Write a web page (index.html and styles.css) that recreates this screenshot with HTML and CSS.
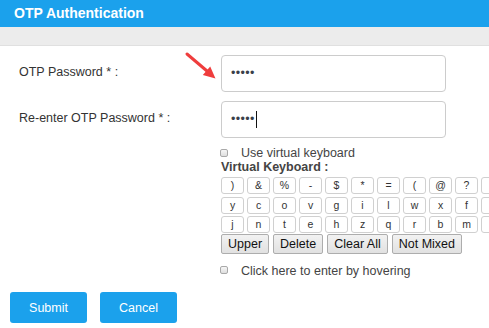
FILE: index.html
```html
<!DOCTYPE html>
<html>
<head>
<meta charset="utf-8">
<link rel="stylesheet" href="styles.css">
</head>
<body>
<div class="header">OTP Authentication</div>
<div class="band"></div>
<div class="form">
  <div class="row">
    <div class="label">OTP Password * :</div>
    <div class="field"><span class="dots">•••••</span></div>
  </div>
  <div class="row">
    <div class="label">Re-enter OTP Password * :</div>
    <div class="field"><span class="dots">•••••</span><span class="caret"></span></div>
  </div>
  <div class="vk">
    <div class="check-line"><span class="checkbox"></span>Use virtual keyboard</div>
    <div class="vk-title">Virtual Keyboard :</div>
    <div class="keys">
      <div class="key-row">
        <span class="key">)</span><span class="key">&amp;</span><span class="key">%</span><span class="key">-</span><span class="key">$</span><span class="key">*</span><span class="key">=</span><span class="key">(</span><span class="key">@</span><span class="key">?</span><span class="key"></span>
      </div>
      <div class="key-row">
        <span class="key">y</span><span class="key">c</span><span class="key">o</span><span class="key">v</span><span class="key">g</span><span class="key">i</span><span class="key">l</span><span class="key">w</span><span class="key">x</span><span class="key">f</span><span class="key"></span>
      </div>
      <div class="key-row">
        <span class="key">j</span><span class="key">n</span><span class="key">t</span><span class="key">e</span><span class="key">h</span><span class="key">z</span><span class="key">q</span><span class="key">r</span><span class="key">b</span><span class="key">m</span><span class="key"></span>
      </div>
    </div>
    <div class="vk-actions">
      <button class="btn">Upper</button>
      <button class="btn">Delete</button>
      <button class="btn">Clear All</button>
      <button class="btn">Not Mixed</button>
    </div>
    <div class="check-line hover-line"><span class="checkbox"></span>Click here to enter by hovering</div>
  </div>
</div>
<div class="actions">
  <button class="primary">Submit</button>
  <button class="primary">Cancel</button>
</div>
<svg class="arrow" width="36" height="32" viewBox="0 0 36 32">
  <line x1="4" y1="4" x2="24" y2="21" stroke="#ef3d3d" stroke-width="3" stroke-linecap="round"/>
  <polygon points="32.5,28.5 19.8,25 27.2,16.5" fill="#ef3d3d"/>
</svg>
</body>
</html>
```

FILE: styles.css
```css
body {
  margin: 0;
  width: 489px;
  height: 328px;
  overflow: hidden;
  position: relative;
  background: #fff;
  font-family: "Liberation Sans", Arial, sans-serif;
  font-size: 12.5px;
  color: #333;
}

.header {
  height: 27px;
  line-height: 27px;
  padding-left: 14px;
  background: #1ba1ec;
  color: #fff;
  font-weight: bold;
  font-size: 14px;
}

.band {
  height: 18px;
  background: #ececec;
  border-bottom: 1px solid #e0e0e0;
}

.form {
  padding: 9px 0 0 19px;
}

.row {
  display: flex;
  align-items: center;
  margin-bottom: 9px;
}

.label {
  width: 202px;
  flex: none;
  line-height: 15px;
  padding-bottom: 3px;
}

.field {
  width: 225px;
  height: 37px;
  box-sizing: border-box;
  border: 1px solid #cccccc;
  border-radius: 4px;
  display: flex;
  align-items: center;
  padding-left: 9px;
}

.dots {
  font-size: 12.5px;
  letter-spacing: 0.4px;
  color: #3a3f4a;
  line-height: 15px;
}

.caret {
  width: 1px;
  height: 17px;
  background: #111;
  margin-left: 1px;
}

.vk {
  margin-left: 202px;
  line-height: 13.5px;
  color: #444;
}

.check-line {
  display: flex;
  align-items: center;
  white-space: nowrap;
}

.checkbox {
  flex: none;
  width: 8px;
  height: 8px;
  box-sizing: border-box;
  border: 1px solid #a9a9a9;
  border-radius: 2px;
  background: linear-gradient(#f6f6f6, #dedede);
  margin: 0 13px 2px -1px;
}

.vk-title {
  font-weight: bold;
  color: #444;
}

.keys {
  margin-top: 3px;
  display: flex;
  flex-direction: column;
  gap: 2.5px;
}

.key-row {
  display: flex;
  gap: 3px;
}

.key {
  flex: none;
  width: 23px;
  height: 17px;
  box-sizing: border-box;
  border: 1px solid #d0d0d0;
  border-radius: 3px;
  background: #fff;
  font-size: 10.5px;
  line-height: 15px;
  text-align: center;
  color: #333;
}

.vk-actions {
  display: flex;
  gap: 4px;
  margin-top: 1px;
}

.btn {
  height: 20px;
  padding: 0 6px;
  margin: 0;
  border: 1px solid #adadad;
  border-radius: 2px;
  background: linear-gradient(#f2f2f2, #e1e1e1);
  font-family: "Liberation Sans", Arial, sans-serif;
  font-size: 12.5px;
  line-height: 18px;
  color: #111;
}

.hover-line {
  margin-top: 10.5px;
}

.actions {
  display: flex;
  gap: 13px;
  padding-left: 10px;
  margin-top: 14px;
}

.primary {
  width: 77px;
  height: 31px;
  margin: 0;
  padding: 0;
  border: none;
  border-radius: 3px;
  background: #1ba1ec;
  color: #fff;
  font-family: "Liberation Sans", Arial, sans-serif;
  font-size: 12.5px;
}

.arrow {
  position: absolute;
  left: 183px;
  top: 50px;
}
```
